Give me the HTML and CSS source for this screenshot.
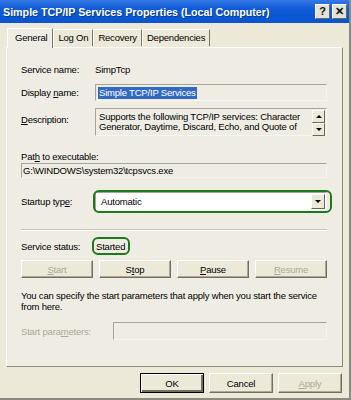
FILE: index.html
```html
<!DOCTYPE html>
<html lang="en">
<head>
  <meta charset="UTF-8">
  <title>Simple TCP/IP Services Properties</title>
  <link rel="stylesheet" href="styles.css">
</head>
<body>
  <div class="window">
    <div class="titlebar">
      <span class="title">Simple TCP/IP Services Properties (Local Computer)</span>
      <div class="tb-btns">
        <span class="tb-btn">?</span>
        <span class="tb-btn">&#x2715;</span>
      </div>
    </div>

    <div class="tabs">
      <span class="tab active">General</span>
      <span class="tab">Log On</span>
      <span class="tab">Recovery</span>
      <span class="tab">Dependencies</span>
    </div>

    <div class="panel">
      <div class="row r-name">
        <span class="label">Service name:</span>
        <span class="value">SimpTcp</span>
      </div>

      <div class="row r-display">
        <span class="label">Display <u>n</u>ame:</span>
        <div class="field"><span class="sel">Simple TCP/IP Services</span></div>
      </div>

      <div class="row r-desc">
        <span class="label"><u>D</u>escription:</span>
        <div class="field desc">
          <div class="desc-text">Supports the following TCP/IP services: Character Generator, Daytime, Discard, Echo, and Quote of</div>
          <div class="scroll">
            <span class="sbtn"><span class="tri up"></span></span>
            <span class="sbtn"><span class="tri down"></span></span>
          </div>
        </div>
      </div>

      <div class="row r-pathlabel">Pat<u>h</u>&nbsp;to executable:</div>
      <div class="field path">G:\WINDOWS\system32\tcpsvcs.exe</div>

      <div class="row r-startup">
        <span class="label">Startup typ<u>e</u>:</span>
        <div class="combo">
          <span>Automatic</span>
          <span class="cbtn"><span class="tri down"></span></span>
          <span class="ring"></span>
        </div>
      </div>

      <div class="sep"></div>

      <div class="row r-status">
        <span class="label">Service status:</span>
        <span class="status">Started<span class="ring"></span></span>
      </div>

      <div class="svc-btns">
        <span class="btn disabled"><u>S</u>tart</span>
        <span class="btn">S<u>t</u>op</span>
        <span class="btn"><u>P</u>ause</span>
        <span class="btn disabled"><u>R</u>esume</span>
      </div>

      <p class="hint">You can specify the start parameters that apply when you start the service from here.</p>

      <div class="row r-params">
        <span class="label disabled">Start para<u>m</u>eters:</span>
        <div class="field params"></div>
      </div>
    </div>

    <div class="actions">
      <span class="btn default">OK</span>
      <span class="btn">Cancel</span>
      <span class="btn disabled"><u>A</u>pply</span>
    </div>
  </div>
</body>
</html>
```

FILE: styles.css
```css
body {
  margin: 0;
  background: #ece9d8;
  font-family: "Liberation Sans", Arial, sans-serif;
  font-size: 9.5px;
  letter-spacing: -0.2px;
  color: #000;
}
u {
  text-decoration: underline;
  text-underline-offset: 1px;
}
.window {
  width: 349px;
  height: 398px;
  background: #ece9d8;
  border-right: 2px solid #8c8a80;
  border-bottom: 2px solid #8c8a80;
}
.titlebar {
  height: 23px;
  background: linear-gradient(#3579e6, #0d5ad8 40%, #0b55cf);
  display: flex;
  align-items: center;
  justify-content: space-between;
  padding: 0 2px 0 3px;
}
.title {
  color: #fff;
  font-weight: bold;
  font-size: 10.7px;
  letter-spacing: 0;
  text-shadow: 1px 1px 0 #0a3a8a;
}
.tb-btns {
  display: flex;
  gap: 2px;
}
.tb-btn {
  width: 13px;
  height: 13px;
  background: #e4e1d6;
  border: 1px solid;
  border-color: #fff #6a685f #6a685f #fff;
  font-weight: bold;
  font-size: 11px;
  line-height: 13px;
  text-align: center;
  color: #111;
}
.tabs {
  display: flex;
  height: 23px;
  align-items: flex-end;
  padding-left: 7px;
  margin-top: 1px;
}
.tab {
  height: 16px;
  line-height: 16px;
  padding: 0 4px;
  border-left: 1px solid #fff;
  border-right: 1px solid #7a786e;
  border-top: 1px solid #fff;
  margin-bottom: 1px;
}
.tab.active {
  height: 19px;
  line-height: 18px;
  padding: 0 5px 0 7px;
  background: #efede3;
  margin-bottom: -1px;
  position: relative;
  z-index: 1;
}
.panel {
  margin-left: 6px;
  width: 337px;
  height: 320px;
  background: #efede3;
  border: 1px solid;
  border-color: #fff #8e8c80 #8e8c80 #fff;
  padding: 0 15px 0 14px;
  box-sizing: border-box;
}
.row {
  display: flex;
  align-items: center;
}
.label {
  width: 74px;
  flex: none;
}
.disabled {
  color: #aca899;
}
.field {
  flex: 1;
  height: 17px;
  border: 1px solid;
  border-color: #a8a598 #f6f5ef #f6f5ef #a8a598;
  box-sizing: border-box;
  background: #efede3;
  display: flex;
  align-items: center;
  padding-left: 2px;
}
.sel {
  background: #316ac5;
  color: #fff;
  line-height: 12px;
  padding: 0 1px;
}
.r-name {
  margin-top: 15px;
  height: 12px;
}
.r-display {
  margin-top: 9px;
}
.r-desc {
  margin-top: 7px;
  align-items: flex-start;
}
.r-desc .label {
  margin-top: 6px;
}
.field.desc {
  height: 28px;
  align-items: flex-start;
  padding-top: 3px;
  padding-right: 1px;
}
.desc-text {
  flex: 1;
  line-height: 10px;
  padding-left: 1px;
  padding-right: 6px;
}
.scroll {
  display: flex;
  flex-direction: column;
  margin-top: -2px;
}
.sbtn, .cbtn {
  width: 11px;
  height: 11px;
  background: #ece9d8;
  border: 1px solid;
  border-color: #fff #6a685f #6a685f #fff;
  display: flex;
  align-items: center;
  justify-content: center;
}
.tri {
  width: 0;
  height: 0;
  border-left: 3px solid transparent;
  border-right: 3px solid transparent;
}
.tri.up {
  border-bottom: 3px solid #000;
}
.tri.down {
  border-top: 3px solid #000;
}
.r-pathlabel {
  margin-top: 14px;
  height: 12px;
}
.field.path {
  margin-top: 1px;
  height: 15px;
  padding-left: 1px;
}
.r-startup {
  margin-top: 14px;
}
.combo {
  flex: 1;
  height: 19px;
  background: #fff;
  border: 1px solid;
  border-color: #a8a598 #f6f5ef #f6f5ef #a8a598;
  box-sizing: border-box;
  display: flex;
  align-items: center;
  justify-content: space-between;
  padding: 0 1px 0 5px;
  position: relative;
}
.cbtn {
  width: 12px;
  height: 13px;
}
.ring {
  position: absolute;
  left: -3px;
  right: -6px;
  top: -3px;
  bottom: -3px;
  border: 2.5px solid #1c7a1c;
  border-radius: 6px;
}
.sep {
  margin-top: 18px;
  height: 1px;
  background: #c9c6b8;
  border-bottom: 1px solid #fff;
}
.r-status {
  margin-top: 8px;
  height: 14px;
}
.status {
  position: relative;
  padding: 0 2px 0 1px;
}
.status .ring {
  left: -3px;
  right: -3px;
  top: -4px;
  bottom: -3px;
}
.svc-btns {
  margin-top: 7px;
  display: grid;
  grid-template-columns: repeat(4, 1fr);
  gap: 6px;
}
.btn {
  height: 18px;
  box-sizing: border-box;
  border: 1px solid;
  border-color: #fff #716f64 #716f64 #fff;
  box-shadow: inset -1px -1px 0 #aca899;
  background: #ece9d8;
  display: flex;
  align-items: center;
  justify-content: center;
}
.hint {
  margin: 12px 0 0;
  line-height: 11px;
}
.r-params {
  margin-top: 10px;
}
.r-params .label {
  width: 92px;
}
.field.params {
  height: 18px;
}
.actions {
  display: flex;
  justify-content: flex-end;
  gap: 5px;
  padding: 6px 7px 0 0;
}
.actions .btn {
  width: 64px;
  height: 20px;
}
.actions .btn.default {
  border: 1px solid #000;
  box-shadow: inset 1px 1px 0 #fff, inset -2px -2px 0 #716f64;
}
```
